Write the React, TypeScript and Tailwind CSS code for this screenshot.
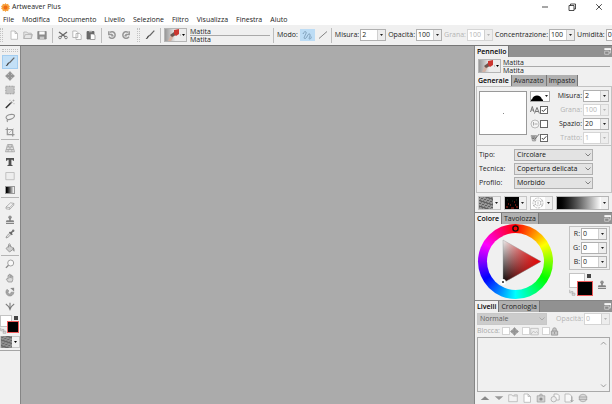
import { useState, type ReactNode } from 'react';
import clsx from 'clsx';

const MENUS = ['File', 'Modifica', 'Documento', 'Livello', 'Selezione', 'Filtro', 'Visualizza', 'Finestra', 'Aiuto'];

function Icon({ children, className = 'size-[10px]' }: { children: ReactNode; className?: string }) {
  return (
    <svg viewBox="0 0 10 10" className={clsx('shrink-0', className)} fill="none" stroke="#8a8a8a" strokeWidth="0.8" aria-hidden="true">
      {children}
    </svg>
  );
}

const icons: Record<string, ReactNode> = {
  file: <path d="M2 1h4l2.500 2.500V9.300H2z M6 1v2.500h2.500" fill="#fff" stroke="#b5b5b5" />,
  open: <path d="M.8 8.500V2h3l1 1.200h3.500V8.500z M.8 8.500l1.500-4h7.200L8.300 8.500z" fill="#e6e6e6" stroke="#b0b0b0" />,
  save: (
    <>
      <path d="M.8 1.500h8.400v7.500H.8z" fill="#8c8c8c" stroke="#858585" />
      <path d="M2.300 1.500h5.400v3H2.300z" fill="#fafafa" stroke="none" />
      <path d="M2.800 6.600h4.400V9H2.800z" fill="#c9c9c9" stroke="none" />
    </>
  ),
  cut: (
    <>
      <path d="M1 2l6.300 4.800M9 2L2.700 6.800" stroke="#6a6a6a" strokeWidth="1.400" />
      <circle cx="2" cy="7.500" r="1.300" stroke="#666" />
      <circle cx="8" cy="7.500" r="1.300" stroke="#666" />
    </>
  ),
  copy: <path d="M.8 1h3.500l1.500 1.500v5H.8z M4 3.500h3.500L9.200 5v4.500H4z" fill="#fff" stroke="#a9a9a9" />,
  paste: (
    <>
      <path d="M1 1.500h7V9H1z" fill="#6a6a6a" stroke="#666" />
      <path d="M3 .8h3v1.500H3z" fill="#aaa" stroke="none" />
      <path d="M4.500 4h3L9 5.500v4H4.500z" fill="#fff" stroke="#777" strokeWidth="0.600" />
    </>
  ),
  undo: <path d="M3 2.300a3.300 3.300 0 1 1-1 4.400M1.800 1.200v3.300h3.200M5 4v1.700h1.500" stroke="#979797" strokeWidth="1.500" />,
  redo: <path d="M7 2.300a3.300 3.300 0 1 0 1 4.400M8.200 1.200v3.300H5M5 4v1.700H3.500" stroke="#979797" strokeWidth="1.500" />,
  brush: (
    <>
      <path d="M9.300 .7L4.300 6" stroke="#666" strokeWidth="1.200" />
      <path d="M4.600 5.500L3 8C2.300 9 1.300 9 .6 8.900c1.300-.5 1.200-2 2.600-3.400z" fill="#444" stroke="none" />
    </>
  ),
  move: <path d="M5 .5l2 2.200H6v1.300h1.400V3L9.500 5l-2.100 2V6H6v1.300h1L5 9.500 3 7.300h1V6H2.600v1L.5 5l2.100-2v1H4V2.700H3z" fill="#969696" stroke="#858585" strokeWidth="0.500" />,
  marquee: <path d="M.8 1.200h8.400v7.600H.8z" fill="#c4c4c4" strokeDasharray="1 0.600" />,
  wand: (
    <>
      <path d="M.8 9l5-5" stroke="#333" strokeWidth="1.500" />
      <path d="M5.500 4.400l1.700-1.600" stroke="#888" strokeWidth="1.500" />
      <path d="M8.500 .5v2M7.500 1.500h2M5 .8v1.200M9 4v1.200" stroke="#999" strokeWidth="0.600" />
    </>
  ),
  lasso: <path d="M2.500 6.500C0 5 1 2.500 4 1.700s6-.2 5.400 1.600S5.500 7 2.500 6.500zm0 0c-1 .8.300 1.200-.3 2.500" stroke="#929292" strokeWidth="1.100" />,
  crop: (
    <>
      <path d="M2.300 .5v7.200h7.200M.5 2.500h7.200v7" stroke="#969696" strokeWidth="1.200" />
      <path d="M3.500 6.500l5-5" strokeWidth="0.500" />
    </>
  ),
  perspective: <path d="M2.600 1.500h4.800L9.500 8.800H.5zM1.800 4h6.400M1.200 6.500h7.600M4 1.500L3.500 4M6 1.500L6.500 4M5 4v2.500M3.300 6.500L3 8.800M6.700 6.500L7 8.800" fill="#e0e0e0" stroke="#999" strokeWidth="0.700" />,
  text: <path d="M1 1h8v2.800H7.900L7.500 2.700H6.400v5l1.200.5v.9H2.400v-.9l1.200-.5v-5H2.500L2.100 3.800H1z" fill="#505050" stroke="none" />,
  shape: <path d="M.8 1.500h8.400v7.200H.8z" fill="#ededed" stroke="#b7b7b7" />,
  eraser: <path d="M1 6l4.500-4.200 3.300.6v1.800L4.700 8.400 1 7.800zM1 6l3.700.6 4.100-4.200M4.700 6.600v1.800" fill="#eee" stroke="#9b9b9b" strokeWidth="0.700" />,
  stamp: (
    <>
      <circle cx="5" cy="2.200" r="1.700" fill="#909090" stroke="none" />
      <path d="M4.200 3h1.600v2.200h2.700l.7 2.100H.8l.7-2.100h2.700zM1 8.100h8v1H1z" fill="#848484" stroke="none" />
    </>
  ),
  dropper: (
    <>
      <path d="M1 9l.6-2L5 3.800l1.300 1.300L3 8.300z" fill="#ddd" stroke="#888" strokeWidth="0.700" />
      <path d="M4.500 3l2.800 2.800M5.800 4.200l2-2.200" stroke="#666" strokeWidth="1.500" />
      <circle cx="8.200" cy="1.700" r="1.200" fill="#777" stroke="none" />
    </>
  ),
  bucket: (
    <>
      <path d="M1 5.500L4.700 2l3.800 4-4 3z" fill="#cfcfcf" stroke="#8a8a8a" />
      <path d="M3.500 4.500V1.700C3.500.4 5.300.4 5.300 1.700v2.400" strokeWidth="0.700" />
      <path d="M7.500 4c1.500.3 2.200 2 1.900 4.500-.8 0-1.300-.8-1-2.500z" fill="#777" stroke="none" />
    </>
  ),
  zoom: (
    <>
      <circle cx="5.700" cy="4" r="3" fill="#f8f8f8" stroke="#999" strokeWidth="0.900" />
      <path d="M3.500 6.200L.9 8.900" stroke="#888" strokeWidth="1.300" />
    </>
  ),
  hand: <path d="M3.200 9L1.300 6.200l.7-.8 1 .7V2.500h1V1.300h1.200V2h1.300v1h1.300v3.800L7 9z M4.200 2.500v2.700M5.500 2v3M6.700 3v2.300" fill="#d8d8d8" stroke="#8d8d8d" strokeWidth="0.700" />,
  rotate: (
    <>
      <path d="M2 2.300a4 4 0 1 0 6.900 2.900L6 5.200A1.500 1.500 0 1 1 4 4z" fill="#a5a5a5" stroke="#8e8e8e" strokeWidth="0.600" />
      <path d="M5.200 1l3.900-.2v3.700z" fill="#8b8b8b" stroke="none" />
    </>
  ),
  symmetry: <path d="M5 1.800v7M.8 3C2.500 4 4 6 5 8.500 6 6 7.500 4 9.200 3" stroke="#7d7d7d" strokeWidth="1.100" />,
  picture: <path d="M.8 1.500h8.400v7.200H.8z M1 8l3-3.500 1.700 2L7.200 5 9 7" fill="#ececec" stroke="#b5b5b5" />,
  lock: <path d="M1.500 4.500h7V9h-7zM3 4.500V2.800c0-2.500 4-2.500 4 0v1.700M5 5.500v2.200" fill="#c6c6c6" stroke="#999" strokeWidth="1" />,
  folder: <path d="M.7 8.700V1.800h3l1 1.200h4.600v5.700z M5.800 3l.6-1.200h2.900V3" fill="#f3f3f3" stroke="#b4b4b4" />,
  mask: (
    <>
      <path d="M1.200 2.800h7.600V9H1.200zM3.500 2.800L4 1.200h2l.5 1.600" fill="#d2d2d2" stroke="#a3a3a3" />
      <circle cx="5" cy="6" r="1.600" fill="#8d8d8d" stroke="none" />
    </>
  ),
  merge: (
    <>
      <path d="M1 1h4.500l2 2v6H1z" fill="#f8f8f8" stroke="#b0b0b0" />
      <path d="M8 3.500v5M6.500 7L8 8.700 9.500 7" stroke="#999" />
    </>
  ),
  duplicate: (
    <>
      <path d="M4 1h3.500L9.200 2.700V7H4z" fill="#f8f8f8" stroke="#ababab" />
      <circle cx="3.700" cy="6.200" r="2.700" fill="#eee" stroke="#ababab" />
    </>
  ),
  trash: (
    <>
      <circle cx="5" cy="5" r="3.800" fill="#dcdcdc" stroke="#a8a8a8" />
      <path d="M.7 4h8.600M.7 6.300h8.600" stroke="#999" strokeWidth="0.800" />
    </>
  ),
  up: <path d="M5 3.200L9.300 7H.7z" fill="#8a8a8a" stroke="none" />,
  down: <path d="M5 7L.7 3.200h8.600z" fill="#9a9a9a" stroke="none" />,
  swap: <path d="M1 1v4.500h3M2.500 3.500h3v3M4.500 6h4v3h-4z" fill="#ddd" stroke="#999" />,
  pressure: (
    <>
      <path d="M1 2.500h5.500L5.500 8H2.500z" fill="#bbb" stroke="#888" strokeWidth="0.600" />
      <path d="M9.300 1L4.500 6.500M2 4h3M2.300 5.500h2" stroke="#666" strokeWidth="0.900" />
    </>
  ),
  clock: (
    <>
      <circle cx="5" cy="5" r="4" fill="#f4f4f4" stroke="#a0a0a0" strokeWidth="0.700" />
      <path d="M3.500 3v3.500M4.500 5h3" stroke="#888" strokeWidth="0.700" />
    </>
  ),
  size: <path d="M.5 7L2.300 1.500 4 7M1.200 5h2.300M4.500 8.500L7 2.500l2.400 6M5.500 6.500h3" stroke="#777" strokeWidth="1" />,
};

function ToolButton({ name, active = false }: { name: string; active?: boolean }) {
  return (
    <button
      aria-label={name}
      className={clsx('flex h-[14px] shrink-0 items-center justify-center', active ? 'w-4 border border-[#a3cdf0] bg-[#c3e0f7]' : 'w-[14px]')}
    >
      <Icon>{icons[name]}</Icon>
    </button>
  );
}

function Arrow() {
  return (
    <svg viewBox="0 0 3 2" className="h-[2px] w-[3px] shrink-0" aria-hidden="true">
      <path d="M0 0h3L1.500 2z" fill="currentColor" />
    </svg>
  );
}

function NumberBox({ label, value, disabled = false }: { label: string; value: string; disabled?: boolean }) {
  return (
    <label className={clsx('flex shrink-0 items-center justify-end gap-px', disabled ? 'text-[#b4b4b4]' : 'text-[#222]')}>
      <span>{label}</span>
      <span className={clsx('flex h-3 w-[26px] border bg-white', disabled ? 'border-[#d5d5d5]' : 'border-[#b0b0b0]')}>
        <input defaultValue={value} disabled={disabled} className="w-4 min-w-0 pl-px outline-none" />
        <button disabled={disabled} aria-label={`Regola ${label}`} className="flex flex-1 items-center justify-center border-l border-[#d0d0d0] bg-[#ededed]">
          <Arrow />
        </button>
      </span>
    </label>
  );
}

function BrushSwatch() {
  return (
    <button aria-label="Pennello" className="flex h-[14px] w-[23px] shrink-0 items-center border border-[#b5b5b5] bg-[#ececec]">
      <svg viewBox="0 0 15 12" className="h-3 w-[15px]" aria-hidden="true">
        <defs>
          <linearGradient id="metal">
            <stop offset="0" stopColor="#989898" />
            <stop offset="0.700" stopColor="#ececec" />
          </linearGradient>
        </defs>
        <path d="M0 0h15v12H0z" fill="url(#metal)" />
        <path d="M3 12L6 6l3 1-3 5z" fill="#d6b3a4" />
        <path d="M5 6L9 3l2 3-4 2z" fill="#6d5650" />
        <path d="M9 1l5-1v5l-3 2-2-2z" fill="#cb3630" />
      </svg>
      <span className="flex flex-1 justify-center border-l border-[#c6c6c6] text-black"><Arrow /></span>
    </button>
  );
}

function BrushName({ className }: { className: string }) {
  return (
    <div className={clsx('leading-[7px] text-[#222]', className)}>
      <div className="border-b border-[#aaa]">Matita</div>
      <div>Matita</div>
    </div>
  );
}

const Sep = () => <span className="h-[15px] w-px shrink-0 bg-[#bdbdbd]" />;
const Grip = () => <span className="h-[14px] w-[3px] shrink-0 border-x border-dotted border-[#c3c3c3]" />;

function TitleBar() {
  return (
    <header className="flex h-[14px] items-center pl-px">
      <svg viewBox="0 0 10 10" className="size-[9px]" aria-hidden="true">
        <path d="M5 0l1 1.500L8 .8l.4 1.800L10 3.500 9 5l1 1.500-1.700.7L8 9.200 6 8.500 5 10 4 8.500l-2 .7-.3-2L0 6.500 1 5 0 3.500l1.600-.9L2 .8l2 .7z" fill="#f7a13b" />
        <circle cx="5" cy="5" r="2.200" fill="#ef6a13" />
      </svg>
      <h1 className="ml-[2px] flex-1">Artweaver Plus</h1>
      <div className="flex gap-[17px] pr-2">
        <button aria-label="Riduci a icona"><Icon><path d="M2 5h6" stroke="#222" /></Icon></button>
        <button aria-label="Ripristina"><Icon><path d="M2 3.500h5v5H2zM3.500 3.500V2h5v5H7" stroke="#222" /></Icon></button>
        <button aria-label="Chiudi"><Icon><path d="M2.200 2.200l5.600 5.600M7.800 2.200L2.200 7.800" stroke="#222" /></Icon></button>
      </div>
    </header>
  );
}

function OptionsBar() {
  return (
    <div className="flex h-5 items-center overflow-hidden bg-[#f0f0f0]">
      <Grip />
      <div className="mr-[3px] ml-1 flex">
        {['file', 'open', 'save'].map(name => <ToolButton key={name} name={name} />)}
      </div>
      <Sep />
      <div className="mx-[3px] flex">
        {['cut', 'copy', 'paste'].map(name => <ToolButton key={name} name={name} />)}
      </div>
      <Sep />
      <div className="mr-1 ml-[3px] flex">
        {['undo', 'redo'].map(name => <ToolButton key={name} name={name} />)}
      </div>
      <div className="flex items-center gap-[3px]">
        <Grip />
        <ToolButton name="brush" />
        <Sep />
      </div>
      <div className="ml-[3px] flex items-center gap-[3px]">
        <BrushSwatch />
        <BrushName className="w-20" />
        <Sep />
      </div>
      <div className="ml-[3px] flex items-center gap-[2px]">
        <span>Modo:</span>
        <button aria-label="Mano libera" className="flex h-3 w-[15px] items-center justify-center bg-[#bcdcf5]">
          <Icon><path d="M1 4c1-3 4-3 3-.5S1 8.500 3 8.500s2.500-5 4.500-4.500S6 9 7.500 9 9.500 7.500 9 6.500" stroke="#7d9db8" strokeWidth="1" /></Icon>
        </button>
        <button aria-label="Linea" className="flex h-3 w-3 items-center justify-center">
          <Icon><path d="M1 8.500L9 1.500" stroke="#666" strokeWidth="0.800" /></Icon>
        </button>
        <Sep />
      </div>
      <div className="ml-[3px] flex gap-[2px]">
        <NumberBox label="Misura:" value="2" />
        <NumberBox label="Opacità:" value="100" />
        <NumberBox label="Grana:" value="100" disabled />
        <NumberBox label="Concentrazione:" value="100" />
        <NumberBox label="Umidità:" value="0" />
      </div>
    </div>
  );
}

function Noise({ className = 'w-[14px]' }: { className?: string }) {
  return (
    <svg viewBox="0 0 14 12" preserveAspectRatio="xMidYMid slice" className={clsx('h-3 shrink-0 bg-[#7c7c7c]', className)} aria-hidden="true">
      {Array.from({ length: 168 }, (_, i) => {
        const v = (i * 7919 + i * i * 31) % 17;
        return <path key={i} d={`M${i % 14} ${Math.floor(i / 14)}h1v1h-1z`} fill={v < 6 ? '#606060' : v < 11 ? '#7c7c7c' : '#989898'} />;
      })}
    </svg>
  );
}

function ColorPair({ small = false }: { small?: boolean }) {
  return (
    <div className={clsx('relative shrink-0', small ? 'h-[18px] w-5' : 'h-[23px] w-6')}>
      <button aria-label="Colore secondario" className={clsx('absolute top-0 left-0 border border-[#c4c4c4] bg-white', small ? 'size-3' : 'h-[15px] w-4')} />
      <span className={clsx('absolute top-px size-1 bg-[#444]', small ? 'left-[14px]' : 'left-[18px]')} />
      <Icon className={clsx('absolute left-0 size-[7px]', small ? 'top-3' : 'top-4')}>{icons.swap}</Icon>
      <button aria-label="Colore primario" className={clsx('absolute border border-[#ef5a5a] bg-black', small ? 'top-[6px] left-[7px] size-3' : 'top-2 left-2 h-[15px] w-4')} />
    </div>
  );
}

const TOOL_GROUPS = [
  ['brush', 'move', 'marquee', 'wand', 'lasso', 'crop'],
  ['perspective', 'text', 'shape', 'gradient'],
  ['eraser', 'stamp', 'dropper', 'bucket'],
  ['zoom', 'hand', 'rotate', 'symmetry'],
];

function ToolBox() {
  return (
    <aside className="w-[21px] shrink-0 border-r border-[#858585] bg-[#f0f0f0]">
      <div className="flex h-[9px] items-center justify-center">
        <span className="h-[3px] w-4 border-y border-dotted border-[#c3c3c3]" />
      </div>
      {TOOL_GROUPS.map((group, i) => (
        <div key={i} className={clsx('mx-px flex flex-col items-center', i > 0 && 'border-t border-[#b5b5b5] pt-px')}>
          {group.map(name =>
            name === 'gradient' ? (
              <button key={name} aria-label={name} className="flex h-[14px] w-4 items-center justify-center">
                <span className="h-2 w-[10px] border border-[#999] bg-linear-to-r from-black to-white" />
              </button>
            ) : (
              <ToolButton key={name} name={name} active={name === 'brush'} />
            ),
          )}
        </div>
      ))}
      <div className="border-b border-[#a5a5a5] pt-[2px] pb-[2px]">
        <ColorPair small />
        <button aria-label="Trama" className="mt-[3px] flex h-3 w-full items-center border border-[#c6c6c6] text-black">
          <Noise className="w-[11px]" />
          <span className="flex flex-1 justify-center"><Arrow /></span>
        </button>
      </div>
    </aside>
  );
}

function TabBar({ tabs, panel = false }: { tabs: string[]; panel?: boolean }) {
  return (
    <div className={clsx('flex h-[11px] items-stretch leading-[11px]', panel && 'bg-[#919191]')}>
      {tabs.map((tab, i) => (
        <button key={tab} className={clsx('border-r border-[#777] px-[2px]', i === 0 ? 'bg-[#f0f0f0] font-semibold text-black' : 'bg-[#b0b0b0] text-[#222]')}>
          {tab}
        </button>
      ))}
      {panel && (
        <button aria-label="Opzioni pannello" className="mr-px ml-auto flex items-center">
          <Icon className="size-[7px]">
            <path d="M1 1h8.500v6H7" stroke="#d8d8d8" strokeWidth="1.200" />
            <path d="M1 4.500h6V9H1z" fill="#8a8a8a" stroke="#d8d8d8" strokeWidth="1" />
            <path d="M.5 .5H10v2.200H.5z" fill="#fff" stroke="none" />
          </Icon>
        </button>
      )}
    </div>
  );
}

function Check({ label, checked = false, disabled = false }: { label: string; checked?: boolean; disabled?: boolean }) {
  return (
    <span className="relative flex size-2 shrink-0">
      <input
        type="checkbox"
        aria-label={label}
        defaultChecked={checked}
        disabled={disabled}
        className={clsx('peer size-2 appearance-none border bg-white', disabled ? 'border-[#d3d3d3]' : 'border-[#666]')}
      />
      <svg viewBox="0 0 8 8" className="pointer-events-none absolute inset-0 hidden peer-checked:block" aria-hidden="true">
        <path d="M1.800 4L3.300 5.500 6.300 2.300" fill="none" stroke="#222" strokeWidth="0.900" />
      </svg>
    </span>
  );
}

function Select({ value, options, label, disabled = false, className }: { value: string; options: string[]; label: string; disabled?: boolean; className: string }) {
  const [current, setCurrent] = useState(value);
  return (
    <span className={clsx('relative flex h-3', className)}>
      <select
        aria-label={label}
        value={current}
        onChange={e => setCurrent(e.target.value)}
        disabled={disabled}
        className={clsx('w-full appearance-none border pl-[2px] leading-[10px]', disabled ? 'border-[#c8c8c8] bg-[#cccccc] text-[#606060]' : 'border-[#b0b0b0] bg-[#e3e3e3] text-[#111]')}
      >
        {options.map(o => <option key={o}>{o}</option>)}
      </select>
      <svg viewBox="0 0 6 4" className="pointer-events-none absolute top-1 right-[2px] h-1 w-[6px]" aria-hidden="true">
        <path d="M.5 .5L3 3 5.500 .5" fill="none" stroke={disabled ? '#a0a0a0' : '#666'} strokeWidth="0.800" />
      </svg>
    </span>
  );
}

const BRUSH_ROWS = [
  { label: 'Misura:', value: '2', disabled: false },
  { label: 'Grana:', value: '100', disabled: true, icon: 'size', checked: true },
  { label: 'Spazio:', value: '20', disabled: false, icon: 'clock', checked: false },
  { label: 'Tratto:', value: '1', disabled: true, icon: 'pressure', checked: true },
];

const BRUSH_SELECTS = [
  { label: 'Tipo:', value: 'Circolare' },
  { label: 'Tecnica:', value: 'Copertura delicata' },
  { label: 'Profilo:', value: 'Morbido' },
];

function BrushPanel() {
  return (
    <section className="border-b border-[#858585]">
      <TabBar panel tabs={['Pennello']} />
      <div className="flex h-[18px] items-center gap-[2px] pr-[2px] pl-[3px]">
        <BrushSwatch />
        <BrushName className="flex-1" />
      </div>
      <div className="ml-px"><TabBar tabs={['Generale', 'Avanzato', 'Impasto']} /></div>
      <div className="ml-px border border-[#c2c2c2] pb-[2px]">
        <div className="flex gap-[3px] border-b border-[#c2c2c2] pt-[2px] pr-[2px] pl-[2px]">
          <div className="mt-[2px] flex h-11 w-12 shrink-0 items-center justify-center border border-[#999] bg-white">
            <span className="size-px bg-[#888]" />
          </div>
          <div className="flex-1">
            {BRUSH_ROWS.map(row => (
              <div key={row.label} className="flex h-[14px] items-center justify-between">
                {row.icon ? (
                  <span className="flex items-center">
                    <Icon>{icons[row.icon]}</Icon>
                    <Check label={row.label} checked={row.checked} />
                  </span>
                ) : (
                  <button aria-label="Forma" className="flex items-center gap-[2px] border border-[#aaa] bg-white pr-px">
                    <svg viewBox="0 0 12 9" className="h-[9px] w-3" aria-hidden="true"><path d="M0 9V7.500h1C2 2 10 2 11 7.500h1V9z" /></svg>
                    <Arrow />
                  </button>
                )}
                <NumberBox label={row.label} value={row.value} disabled={row.disabled} />
              </div>
            ))}
          </div>
        </div>
        <div className="pt-[2px] pl-[2px]">
          {BRUSH_SELECTS.map(s => (
            <div key={s.label} className="flex h-[14px] items-center">
              <span className="w-[35px]">{s.label}</span>
              <Select label={s.label} value={s.value} options={[s.value]} className="w-[79px]" />
            </div>
          ))}
        </div>
      </div>
      <div className="flex h-[19px] items-center gap-[3px] px-[3px]">
        <button aria-label="Carta" className="flex items-center gap-[2px] border border-[#c6c6c6] pr-[2px]"><Noise /><Arrow /></button>
        <button aria-label="Ugello" className="flex items-center gap-[2px] border border-[#c6c6c6] pr-[2px]">
          <svg viewBox="0 0 14 12" className="h-3 w-[14px] bg-black" aria-hidden="true">
            <path d="M1 10h2M5 8h1M6 11h3M10 8h1M11 10h2M9 5h1M3 7h1" stroke="#b62b1d" />
            <path d="M2 3h1M7 4h1M11 3h1" stroke="#1d3520" />
          </svg>
          <Arrow />
        </button>
        <button aria-label="Trama" className="flex items-center gap-[2px] border border-[#c6c6c6] pr-[2px]">
          <svg viewBox="0 0 14 12" className="h-3 w-[14px] bg-white" fill="none" stroke="#a5a5a5" strokeWidth="0.700" aria-hidden="true">
            <circle cx="7" cy="6" r="5" strokeDasharray="2 0.800" />
            <circle cx="7" cy="6" r="2.800" strokeDasharray="1.500 0.700" />
            <path d="M2 3l3 2M12 3L9 5M2 9l3-2M12 9L9 7M7 4.500v3" />
          </svg>
          <Arrow />
        </button>
        <button aria-label="Gradiente" className="flex h-[14px] flex-1 items-center gap-[2px] border border-[#b5b5b5] pr-[2px]">
          <span className="h-3 flex-1 bg-linear-to-r from-black to-white" />
          <Arrow />
        </button>
      </div>
    </section>
  );
}

function ColorWheel() {
  return (
    <div className="relative size-[75px] shrink-0 rounded-full bg-[conic-gradient(#f00,#ff0,#0f0,#0ff,#00f,#f0f,#f00)] p-[9px]">
      <div className="size-full rounded-full bg-[#f0f0f0]" />
      <svg viewBox="0 0 75 75" className="absolute inset-0" aria-hidden="true">
        <defs>
          <linearGradient id="shade" x1="0" y1="0" x2="0" y2="1">
            <stop offset="0" stopColor="#eee" />
            <stop offset="1" stopColor="#000" />
          </linearGradient>
          <linearGradient id="hue">
            <stop offset="0" stopColor="#f00" stopOpacity="0" />
            <stop offset="1" stopColor="#e80000" />
          </linearGradient>
        </defs>
        <path d="M25 16L63 37.500 25 59z" fill="url(#shade)" />
        <path d="M25 16L63 37.500 25 59z" fill="url(#hue)" stroke="#999" strokeWidth="0.400" />
        <circle cx="37.500" cy="4.500" r="2.600" fill="none" stroke="#111" strokeWidth="1.400" />
        <circle cx="25" cy="58" r="2" fill="#333" stroke="#fff" strokeWidth="1.800" />
      </svg>
    </div>
  );
}

function ColorPanel() {
  return (
    <section className="border-b border-[#858585]">
      <TabBar panel tabs={['Colore', 'Tavolozza']} />
      <div className="flex h-[76px] items-start justify-between pr-[2px] pl-[3px]">
        <ColorWheel />
        <div className="pt-[2px]">
          <div className="w-[41px] border border-[#c2c2c2] pr-[2px]">
            {['R:', 'G:', 'B:'].map(c => (
              <div key={c} className="flex h-[14px] items-center justify-end"><NumberBox label={c} value="0" /></div>
            ))}
          </div>
          <div className="mt-[3px] flex items-center gap-1">
            <ColorPair />
            <button aria-label="Timbro clone"><Icon>{icons.stamp}</Icon></button>
          </div>
        </div>
      </div>
    </section>
  );
}

function LayersPanel() {
  return (
    <section className="flex flex-1 flex-col">
      <TabBar panel tabs={['Livelli', 'Cronologia']} />
      <div className="flex items-center justify-between px-[2px] pt-px">
        <Select label="Fusione" value="Normale" options={['Normale']} disabled className="w-[70px]" />
        <NumberBox label="Opacità:" value="0" disabled />
      </div>
      <div className="flex h-3 items-center gap-[2px] pl-[2px] text-[#aaa]">
        <span>Blocca:</span>
        {['move', 'picture', 'lock'].map(name => (
          <span key={name} className="mr-px flex items-center">
            <Check label={name} disabled />
            <Icon className="size-[9px]">{icons[name]}</Icon>
          </span>
        ))}
      </div>
      <div className="mx-[2px] flex min-h-[54px] flex-1 justify-end border border-[#a9a9a9]">
        <div className="flex w-[11px] flex-col items-center justify-between py-[2px]">
          <Icon className="size-[7px]"><path d="M1.500 6.500L5 3l3.500 3.500" strokeWidth="1.200" /></Icon>
          <Icon className="size-[7px]"><path d="M1.500 3.500L5 7l3.500-3.500" strokeWidth="1.200" /></Icon>
        </div>
      </div>
      <div className="flex h-3 items-center gap-1 pl-[5px]">
        {['up', 'down', 'folder', 'file', 'mask', 'duplicate', 'merge', 'trash'].map(name => (
          <button key={name} aria-label={name}><Icon>{icons[name]}</Icon></button>
        ))}
      </div>
    </section>
  );
}

export default function App() {
  return (
    <div className="flex min-h-screen w-full flex-col overflow-hidden bg-white font-['Open_Sans','Noto_Sans',sans-serif] text-[7px] leading-[10px] text-[#222]">
      <TitleBar />
      <nav className="flex h-[11px] items-center gap-2 pl-[3px]">
        {MENUS.map(m => <button key={m}>{m}</button>)}
      </nav>
      <OptionsBar />
      <main className="flex flex-1 border-t border-[#777] bg-[#ababab]">
        <ToolBox />
        <div className="flex-1" />
        <aside className="flex w-[138px] shrink-0 flex-col border-l border-[#858585] bg-[#f0f0f0]">
          <BrushPanel />
          <ColorPanel />
          <LayersPanel />
        </aside>
      </main>
    </div>
  );
}
